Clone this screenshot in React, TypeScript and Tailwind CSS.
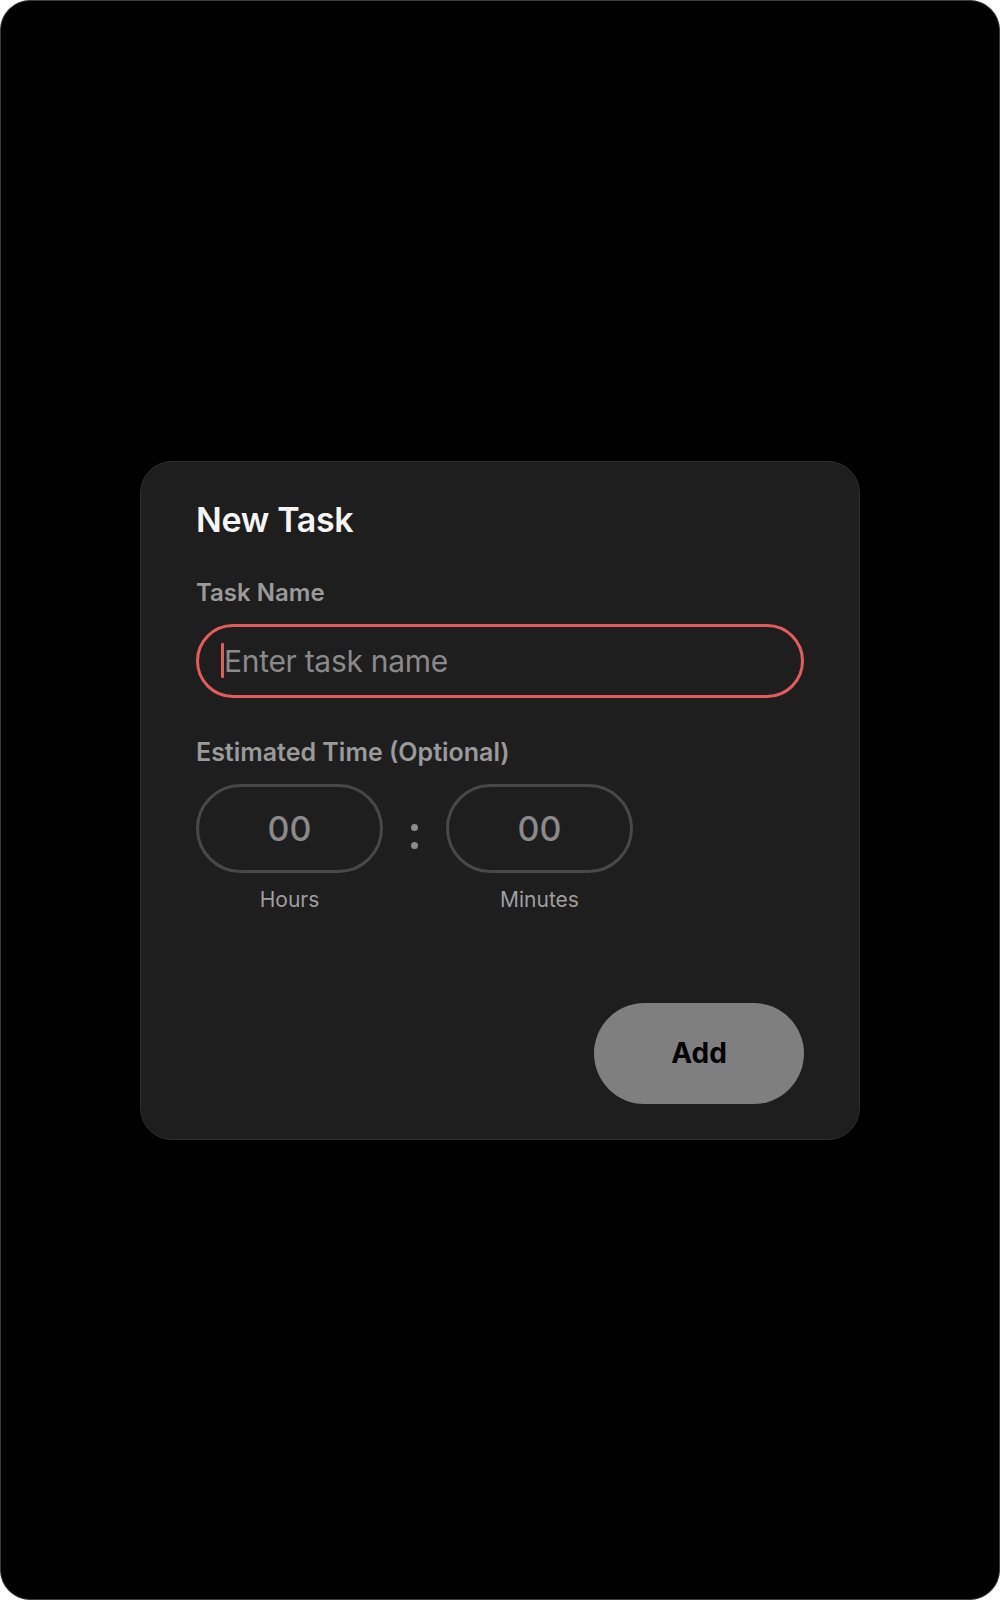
export default function App() {
  const font = { fontFamily: "Inter, 'Noto Sans', sans-serif" };

  return (
    <div className="w-[1000px] h-[1600px] bg-white" style={font}>
      <div className="w-full h-full rounded-[30px] bg-black border border-[#3a3a3a] flex items-center justify-center">
        {/* card */}
        <div className="w-[720px] bg-[#1e1e1e] border border-[#2f2f2f] rounded-[32px] pt-[38px] pb-[35px] px-[55px]">
          <h1 className="text-[34px] leading-[40px] font-semibold text-[#f5f5f5] tracking-[-0.01em]">
            New Task
          </h1>

          <div className="mt-[38px] text-[24px] leading-[30px] font-semibold text-[#9a9a9a]">
            Task Name
          </div>
          <div className="mt-[16px] h-[74px] rounded-full border-[3px] border-[#e35b5b] flex items-center pl-[22px]">
            <span className="w-[3px] h-[35px] bg-[#e35b5b] rounded-[1px]" />
            <span className="text-[30px] leading-none text-[#8a8a8a] tracking-[-0.01em]">
              Enter task name
            </span>
          </div>

          <div className="mt-[39px] text-[25px] leading-[30px] font-semibold text-[#9a9a9a]">
            Estimated Time (Optional)
          </div>
          <div className="mt-[17px] flex items-start">
            <div className="flex flex-col items-center w-[187px]">
              <div className="w-[187px] h-[89px] rounded-full border-[3px] border-[#484848] flex items-center justify-center text-[34px] font-medium text-[#8a8a8a]">
                00
              </div>
              <span className="mt-[15px] text-[21px] leading-[24px] text-[#9f9f9f]">
                Hours
              </span>
            </div>
            <div className="w-[63px] h-[89px] flex flex-col items-center justify-center gap-[11px] pt-[17px]">
              <span className="w-[7px] h-[7px] rounded-full bg-[#8c8c8c]" />
              <span className="w-[7px] h-[7px] rounded-full bg-[#8c8c8c]" />
            </div>
            <div className="flex flex-col items-center w-[187px]">
              <div className="w-[187px] h-[89px] rounded-full border-[3px] border-[#484848] flex items-center justify-center text-[34px] font-medium text-[#8a8a8a]">
                00
              </div>
              <span className="mt-[15px] text-[21px] leading-[24px] text-[#9f9f9f]">
                Minutes
              </span>
            </div>
          </div>

          <div className="mt-[91px] flex justify-end">
            <button className="w-[210px] h-[101px] rounded-full bg-[#7f7f7f] text-[28px] font-bold text-black">
              Add
            </button>
          </div>
        </div>
      </div>
    </div>
  );
}
